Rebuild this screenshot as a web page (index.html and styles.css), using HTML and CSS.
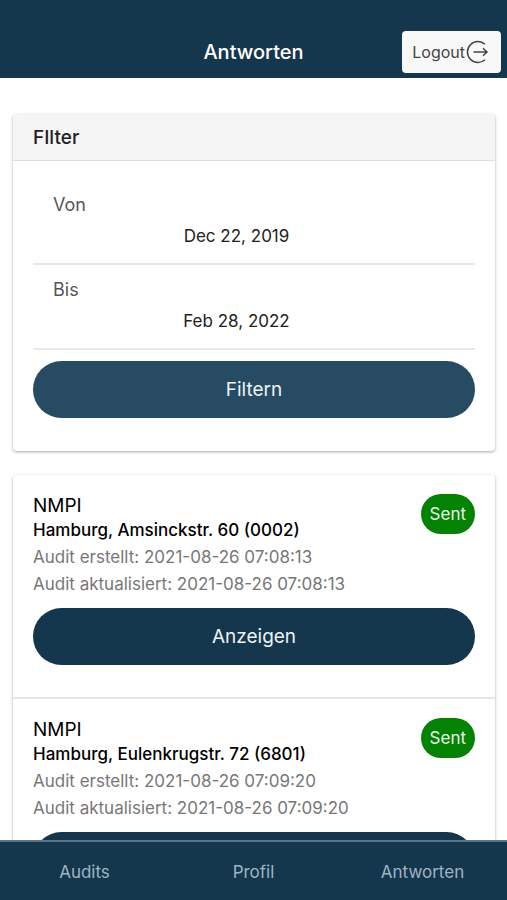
FILE: index.html
```html
<!DOCTYPE html>
<html lang="de">
<head>
  <meta charset="utf-8">
  <meta name="viewport" content="width=device-width, initial-scale=1">
  <title>Antworten</title>
  <link rel="stylesheet" href="styles.css">
</head>
<body>
  <header class="header">
    <h1 class="header-title">Antworten</h1>
    <button class="logout" type="button">
      Logout
      <svg class="logout-icon" viewBox="0 0 24 24" aria-hidden="true">
        <path d="M20 4.2A10.5 10.5 0 1 0 20 19.8M8.5 12H22M18 8.2L22 12L18 15.8"/>
      </svg>
    </button>
  </header>

  <main class="content">
    <form class="card">
      <h2 class="card-header">FIlter</h2>
      <div class="card-body">
        <div class="field">
          <label for="from">Von</label>
          <input id="from" type="text" value="Dec 22, 2019" readonly>
        </div>
        <div class="field">
          <label for="to">Bis</label>
          <input id="to" type="text" value="Feb 28, 2022" readonly>
        </div>
        <button class="btn btn-filter" type="button">Filtern</button>
      </div>
    </form>

    <div class="card">
      <article class="item">
        <div class="item-top">
          <div>
            <div class="item-type">NMPI</div>
            <h3 class="item-name">Hamburg, Amsinckstr. 60 (0002)</h3>
          </div>
          <span class="badge">Sent</span>
        </div>
        <p class="item-date">Audit erstellt: 2021-08-26 07:08:13</p>
        <p class="item-date">Audit aktualisiert: 2021-08-26 07:08:13</p>
        <button class="btn" type="button">Anzeigen</button>
      </article>
      <article class="item">
        <div class="item-top">
          <div>
            <div class="item-type">NMPI</div>
            <h3 class="item-name">Hamburg, Eulenkrugstr. 72 (6801)</h3>
          </div>
          <span class="badge">Sent</span>
        </div>
        <p class="item-date">Audit erstellt: 2021-08-26 07:09:20</p>
        <p class="item-date">Audit aktualisiert: 2021-08-26 07:09:20</p>
        <button class="btn" type="button">Anzeigen</button>
      </article>
    </div>
  </main>

  <nav class="tabs">
    <a href="#audits">Audits</a>
    <a href="#profil">Profil</a>
    <a href="#antworten">Antworten</a>
  </nav>
</body>
</html>
```

FILE: styles.css
```css
* { box-sizing: border-box; }

body {
  margin: 0;
  height: 100vh;
  display: flex;
  flex-direction: column;
  background: #fff;
  color: #000;
  font-family: Inter, "Liberation Sans", sans-serif;
  font-size: 17px;
  line-height: 24px;
}

h1, h2, h3, p { margin: 0; font-weight: 500; }
button, input { font: inherit; }

/* header */
.header {
  flex: none;
  display: grid;
  grid-template-columns: 1fr auto 1fr;
  align-items: center;
  padding: 31px 6px 5px;
  background: #14374e;
}
.header-title {
  grid-column: 2;
  color: #fff;
  font-size: 20px;
}
.logout {
  justify-self: end;
  display: flex;
  align-items: center;
  height: 42px;
  padding: 0 12px 0 10px;
  border: 0;
  border-radius: 4px;
  background: #f8f8f8;
  color: #444;
  font-size: 16px;
}
.logout-icon {
  width: 24px;
  height: 24px;
  fill: none;
  stroke: #444;
  stroke-width: 1.5;
}

/* content */
.content {
  flex: 1;
  min-height: 0;
  overflow-y: auto;
  scrollbar-width: none;
  padding: 36px 12px 0 13px;
}
.card {
  margin-bottom: 24px;
  border-radius: 4px;
  background: #fff;
  box-shadow: 0 1px 3px rgba(0, 0, 0, 0.35);
}
.card-header {
  padding: 12px 20px 10px;
  border-bottom: 1px solid #dedede;
  border-radius: 4px 4px 0 0;
  background: #f5f5f5;
  color: #222;
  font-size: 19px;
}
.card-body { padding: 19px 20px 33px; }

.field {
  display: flex;
  flex-direction: column;
  gap: 7px;
  padding: 13px 35px 15px 0;
  border-bottom: 2px solid #e8e8e8;
}
.field label {
  padding-left: 20px;
  color: #555;
  font-size: 18px;
}
.field input {
  width: 100%;
  height: 24px;
  padding: 0;
  border: 0;
  background: none;
  color: #222;
  text-align: center;
}

.btn {
  display: block;
  width: 100%;
  height: 57px;
  margin-top: 10px;
  border: 0;
  border-radius: 29px;
  background: #14374e;
  color: #eef3f6;
  font-size: 19px;
}
.btn-filter {
  margin-top: 11px;
  background: #274b63;
}

/* audit list */
.item {
  padding: 19px 20px 32px;
  border-bottom: 2px solid #e6e6e6;
}
.item-top {
  display: flex;
  justify-content: space-between;
  align-items: flex-start;
  margin-bottom: 2px;
}
.item-type { font-size: 19px; }
.item-name { font-size: 17px; }
.item-date {
  color: #777;
  font-weight: 400;
  line-height: 27px;
}
.badge {
  padding: 8px 9px;
  border-radius: 20px;
  background: #048204;
  color: #e9f8e9;
}

/* tab bar */
.tabs {
  flex: none;
  display: grid;
  grid-template-columns: repeat(3, 1fr);
  padding: 18px 0 16px;
  border-top: 2px solid #5b7383;
  background: #14374e;
  text-align: center;
}
.tabs a {
  color: #9fb4c2;
  text-decoration: none;
}
```
